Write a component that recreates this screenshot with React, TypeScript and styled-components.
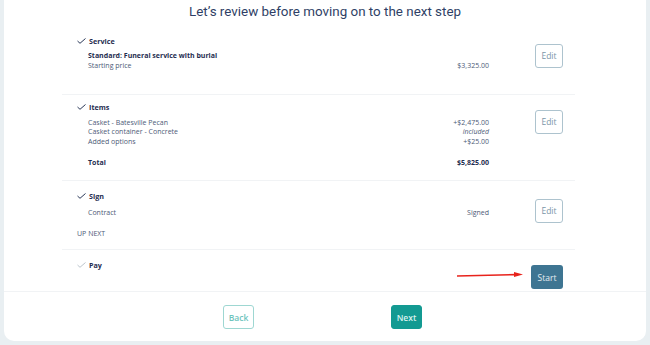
import styled, { createGlobalStyle } from 'styled-components'

const GlobalStyle = createGlobalStyle`
  body {
    margin: 0;
    background: #e9eff2;
    font-family: "Open Sans", "Liberation Sans", sans-serif;
  }
`

const Card = styled.div`
  margin: 0 4px;
  background: #ffffff;
  border-radius: 0 0 10px 10px;
  display: flex;
  flex-direction: column;
`

const Title = styled.h1`
  margin: 0;
  height: 22px;
  line-height: 23px;
  text-align: center;
  font-family: Roboto, "Open Sans", sans-serif;
  font-weight: 400;
  font-size: 13.4px;
  color: #2f3f66;
`

const Sections = styled.div`
  margin-left: 58px;
  width: 513px;
`

const Section = styled.section<{ $pt: number; $pb: number; $last?: boolean }>`
  position: relative;
  display: flex;
  padding: ${p => p.$pt}px 12px ${p => p.$pb}px 15px;
  border-bottom: ${p => (p.$last ? 'none' : '1px solid #f1f3f5')};
`

const Main = styled.div`
  flex: 1;
`

const Action = styled.div<{ $offset: number }>`
  width: 74px;
  display: flex;
  justify-content: flex-end;
  align-items: flex-start;
  padding-top: ${p => p.$offset}px;
`

const Head = styled.div<{ $muted?: boolean }>`
  display: flex;
  align-items: center;
  gap: 3px;
  height: 12px;
  font-size: 7.2px;
  font-weight: 700;
  color: #1f2d50;

  svg {
    stroke: ${p => (p.$muted ? '#bcc5cd' : '#2a3858')};
  }
`

const Rows = styled.div<{ $gap: number }>`
  margin-top: ${p => p.$gap}px;
`

const Row = styled.div<{ $space?: number; $strong?: boolean }>`
  display: flex;
  justify-content: space-between;
  padding-left: 11px;
  margin-top: ${p => p.$space ?? 0}px;
  height: 9.5px;
  line-height: 9.5px;
  font-size: 7px;
  color: ${p => (p.$strong ? '#1f2d50' : '#4d5b77')};
  font-weight: ${p => (p.$strong ? 700 : 400)};
`

const Amount = styled.span<{ $italic?: boolean }>`
  font-style: ${p => (p.$italic ? 'italic' : 'normal')};
`

const UpNext = styled.div`
  margin-top: 11.75px;
  height: 9.5px;
  line-height: 9.5px;
  font-size: 7px;
  color: #4d5b77;
`

const EditButton = styled.button`
  width: 28px;
  height: 24px;
  padding: 0;
  border: 1px solid #adc3ce;
  border-radius: 3px;
  background: #ffffff;
  color: #7a95a7;
  font-family: "Open Sans", sans-serif;
  font-size: 8.5px;
`

const StartButton = styled.button`
  width: 32px;
  height: 24px;
  padding: 0;
  border: none;
  border-radius: 3px;
  background: #3e7592;
  color: #e3ecf1;
  font-family: "Open Sans", sans-serif;
  font-size: 8.5px;
`

const Arrow = styled.svg`
  position: absolute;
  left: 394px;
  top: 21px;
`

const Footer = styled.div`
  display: flex;
  justify-content: center;
  gap: 137px;
  padding: 13px 5px 12px 0;
  border-top: 1px solid #f1f3f5;
`

const NavButton = styled.button<{ $primary?: boolean }>`
  width: 31px;
  height: 24px;
  padding: 0;
  border-radius: 3px;
  font-family: "Open Sans", sans-serif;
  font-size: 8.5px;
  font-weight: 600;
  border: 1px solid ${p => (p.$primary ? '#139a92' : '#9ed7d2')};
  background: ${p => (p.$primary ? '#139a92' : '#ffffff')};
  color: ${p => (p.$primary ? '#d9f1ee' : '#6fc4bd')};
`

const Check = () => (
  <svg width="9" height="6" viewBox="0 0 9 6" fill="none" strokeWidth="1">
    <polyline points="0.5,3 3,5.3 8.5,0.5" />
  </svg>
)

export default function App() {
  return (
    <>
      <GlobalStyle />
      <Card>
        <Title>Let’s review before moving on to the next step</Title>
        <Sections>
          <Section $pt={13} $pb={24}>
            <Main>
              <Head><Check />Service</Head>
              <Rows $gap={4}>
                <Row $strong>Standard: Funeral service with burial</Row>
                <Row><span>Starting price</span><Amount>$3,325.00</Amount></Row>
              </Rows>
            </Main>
            <Action $offset={8.5}><EditButton>Edit</EditButton></Action>
          </Section>

          <Section $pt={6} $pb={12.5}>
            <Main>
              <Head><Check />Items</Head>
              <Rows $gap={4.5}>
                <Row><span>Casket - Batesville Pecan</span><Amount>+$2,475.00</Amount></Row>
                <Row><span>Casket container - Concrete</span><Amount $italic>included</Amount></Row>
                <Row><span>Added options</span><Amount>+$25.00</Amount></Row>
                <Row $strong $space={12}><span>Total</span><Amount>$5,825.00</Amount></Row>
              </Rows>
            </Main>
            <Action $offset={8.5}><EditButton>Edit</EditButton></Action>
          </Section>

          <Section $pt={9} $pb={10.25}>
            <Main>
              <Head><Check />Sign</Head>
              <Rows $gap={6}>
                <Row><span>Contract</span><Amount>Signed</Amount></Row>
              </Rows>
              <UpNext>UP NEXT</UpNext>
            </Main>
            <Action $offset={8.5}><EditButton>Edit</EditButton></Action>
          </Section>

          <Section $pt={9} $pb={2} $last>
            <Main>
              <Head $muted><Check />Pay</Head>
            </Main>
            <Action $offset={6}><StartButton>Start</StartButton></Action>
            <Arrow width="68" height="8" viewBox="0 0 68 8">
              <line x1="1" y1="5" x2="60" y2="3.6" stroke="#e8231c" strokeWidth="1.6" />
              <polygon points="58,1 67,3.4 58,6" fill="#e8231c" />
            </Arrow>
          </Section>
        </Sections>
        <Footer>
          <NavButton>Back</NavButton>
          <NavButton $primary>Next</NavButton>
        </Footer>
      </Card>
    </>
  )
}
